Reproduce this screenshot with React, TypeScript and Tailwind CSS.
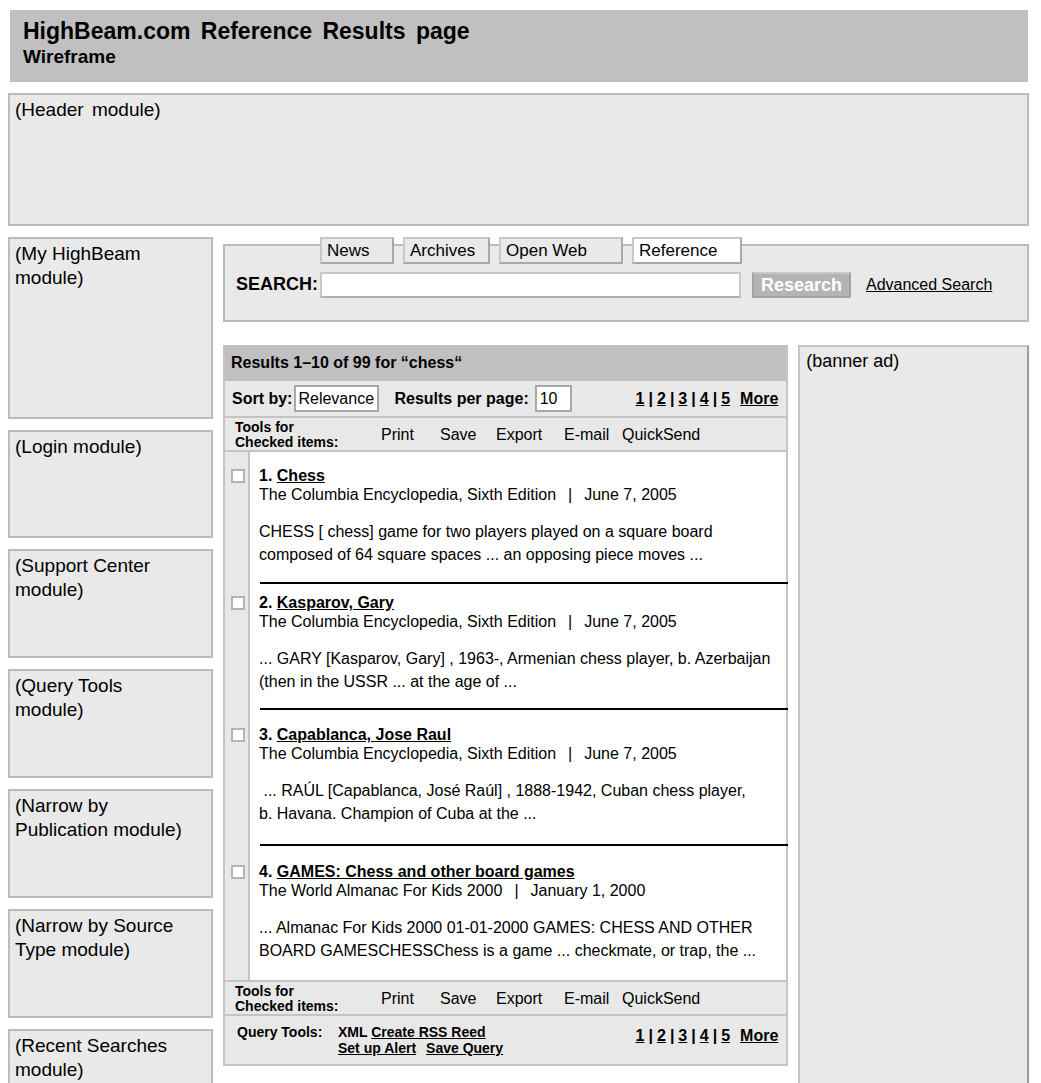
import React from 'react';

interface ResultItem {
  num: number;
  title: string;
  source: string;
  date: string;
  snippet: string[];
}

const results: ResultItem[] = [
  {
    num: 1,
    title: 'Chess',
    source: 'The Columbia Encyclopedia, Sixth Edition',
    date: 'June 7, 2005',
    snippet: ['CHESS [ chess] game for two players played on a square board', 'composed of 64 square spaces ... an opposing piece moves ...'],
  },
  {
    num: 2,
    title: 'Kasparov, Gary',
    source: 'The Columbia Encyclopedia, Sixth Edition',
    date: 'June 7, 2005',
    snippet: ['... GARY [Kasparov, Gary] , 1963-, Armenian chess player, b. Azerbaijan', '(then in the USSR ... at the age of ...'],
  },
  {
    num: 3,
    title: 'Capablanca, Jose Raul',
    source: 'The Columbia Encyclopedia, Sixth Edition',
    date: 'June 7, 2005',
    snippet: ['\u00a0... RAÚL [Capablanca, José Raúl] , 1888-1942, Cuban chess player,', 'b. Havana.  Champion of Cuba at the ...'],
  },
  {
    num: 4,
    title: 'GAMES: Chess and other board games',
    source: 'The World Almanac For Kids 2000',
    date: 'January  1, 2000',
    snippet: ['... Almanac For Kids 2000 01-01-2000 GAMES: CHESS AND OTHER', 'BOARD GAMESCHESSChess is a game ... checkmate,  or trap, the ...'],
  },
];

// spacing above each item's title, and above the separator under its snippet
const itemTop = ['pt-[14px]', 'pt-[9px]', 'pt-[15px]', 'pt-[16px]'];
const sepTop = ['mt-[16px]', 'mt-[15px]', 'mt-[19px]', ''];

const leftModules = [
  { label: ['(My HighBeam', 'module)'], h: 'h-[182px]' },
  { label: ['(Login module)'], h: 'h-[108px]' },
  { label: ['(Support Center', 'module)'], h: 'h-[109px]' },
  { label: ['(Query Tools', 'module)'], h: 'h-[109px]' },
  { label: ['(Narrow by', 'Publication  module)'], h: 'h-[109px]' },
  { label: ['(Narrow by Source', 'Type module)'], h: 'h-[109px]' },
  { label: ['(Recent Searches', 'module)'], h: 'h-[109px]' },
];

const tabs = [
  { name: 'News', w: 'w-[74px]', active: false },
  { name: 'Archives', w: 'w-[87px]', active: false },
  { name: 'Open Web', w: 'w-[124px]', active: false },
  { name: 'Reference', w: 'w-[110px]', active: true },
];

const Pager = () => (
  <div className="flex items-center gap-[4px] text-[16px] font-bold">
    <span className="underline">1</span>|<span className="underline">2</span>|<span className="underline">3</span>|
    <span className="underline">4</span>|<span className="underline">5</span>
    <span className="underline ml-[6px]">More</span>
  </div>
);

const ToolsRow = () => (
  <div className="flex items-center h-[36px] border-y-2 border-[#c4c4c4] bg-[#e8e8e8] pl-[10px]">
    <div className="text-[14px] font-bold leading-[15px] w-[146px] pt-[2px]">
      Tools for
      <br />
      Checked items:
    </div>
    <div className="flex text-[16px] pt-[2px]">
      <span className="w-[59px]">Print</span>
      <span className="w-[56px]">Save</span>
      <span className="w-[68px]">Export</span>
      <span className="w-[58px]">E-mail</span>
      <span>QuickSend</span>
    </div>
  </div>
);

const App: React.FC = () => {
  return (
    <div className="w-[1041px] h-[1083px] overflow-hidden bg-white text-black font-['Liberation_Sans',Arial,sans-serif]">
      {/* title bar */}
      <div className="ml-[10px] mt-[10px] w-[1018px] h-[72px] bg-[#c0c0c0] pl-[13px] pt-[7px]">
        <div className="text-[23px] font-bold leading-[29px] [word-spacing:4px]">HighBeam.com Reference Results page</div>
        <div className="text-[19px] font-bold leading-[22px]">Wireframe</div>
      </div>

      {/* header module */}
      <div className="ml-[8px] mt-[11px] w-[1021px] h-[133px] bg-[#e9e9e9] border-2 border-[#bcbcbc] pl-[5px] pt-[1px] text-[19px] [word-spacing:3px]">
        (Header module)
      </div>

      <div className="flex mt-[11px] ml-[8px]">
        {/* left column */}
        <div className="flex flex-col gap-[11px] w-[205px] shrink-0">
          {leftModules.map((m, i) => (
            <div key={i} className={`${m.h} bg-[#e9e9e9] border-2 border-[#bcbcbc] pl-[5px] pt-[3px] text-[19px] leading-[24px]`}>
              {m.label.map((l, j) => (
                <div key={j}>{l}</div>
              ))}
            </div>
          ))}
        </div>

        {/* main */}
        <div className="ml-[10px] w-[806px]">
          {/* search panel */}
          <div className="mt-[7px] h-[78px] bg-[#e9e9e9] border-2 border-[#bcbcbc]">
            <div className="flex gap-[9px] ml-[95px] -mt-[9px]">
              {tabs.map((t) => (
                <div
                  key={t.name}
                  className={`${t.w} h-[27px] border-2 border-[#c8c8c8] border-r-[#a8a8a8] border-b-[#a8a8a8] pl-[5px] text-[17px] leading-[23px] ${t.active ? 'bg-white' : 'bg-[#e9e9e9]'}`}
                >
                  {t.name}
                </div>
              ))}
            </div>
            <div className="flex items-center mt-[7px] ml-[11px]">
              <span className="text-[18px] font-bold w-[84px]">SEARCH:</span>
              <div className="w-[421px] h-[26px] bg-white border-2 border-[#c8c8c8] border-b-[#b0b0b0]" />
              <div className="ml-[11px] w-[99px] h-[26px] bg-[#b4b4b4] border-2 border-[#a4a4a4] border-t-[#c8c8c8] text-white font-bold text-[18px] leading-[22px] text-center">
                Research
              </div>
              <span className="ml-[15px] text-[16px] underline">Advanced Search</span>
            </div>
          </div>

          <div className="flex mt-[23px] items-start">
            {/* results panel */}
            <div className="w-[566px] border-x-2 border-b-2 border-[#c4c4c4]">
              <div className="h-[36px] bg-[#c0c0c0] pl-[6px] pt-[6px] text-[16px] font-bold">
                Results 1–10 of 99 for “chess“
              </div>
              <div className="flex items-center h-[35px] bg-[#e8e8e8] pl-[7px] pr-[8px] text-[16px]">
                <span className="font-bold mr-[2px]">Sort by:</span>
                <div className="h-[27px] w-[85px] bg-white border-2 border-[#a8a8a8] pl-[2px] leading-[23px]">Relevance</div>
                <span className="font-bold ml-[15px] mr-[6px]">Results per page:</span>
                <div className="h-[27px] w-[37px] bg-white border-2 border-[#a8a8a8] pl-[3px] leading-[23px]">10</div>
                <div className="ml-auto">
                  <Pager />
                </div>
              </div>
              <ToolsRow />

              {/* results list */}
              <div className="flex flex-col h-[528px]">
                {results.map((r, i) => (
                  <div key={r.num} className={`flex ${i === results.length - 1 ? 'flex-1' : ''}`}>
                    <div className={`w-[25px] shrink-0 bg-[#e8e8e8] border-r-2 border-[#c4c4c4] ${itemTop[i]}`}>
                      <div className="w-[14px] h-[14px] ml-[6px] mt-[3px] bg-white border-2 border-[#b4b4b4]" />
                    </div>
                    <div className={`flex-1 pl-[9px] ${itemTop[i]}`}>
                      <div className="text-[16px] leading-[19px] font-bold">
                        {r.num}. <span className="underline">{r.title}</span>
                      </div>
                      <div className="text-[16px] leading-[19px]">
                        {r.source}
                        <span className="mx-[12px]">|</span>
                        {r.date}
                      </div>
                      <div className="text-[16px] leading-[23px] mt-[16px]">
                        {r.snippet.map((s, j) => (
                          <div key={j}>{s}</div>
                        ))}
                      </div>
                      {i < results.length - 1 && <div className={`h-[2px] bg-black ml-[1px] -mr-[2px] ${sepTop[i]}`} />}
                    </div>
                  </div>
                ))}
              </div>

              <ToolsRow />
              <div className="flex h-[48px] bg-[#e8e8e8] pl-[12px] pr-[8px] pt-[8px]">
                <span className="text-[14px] font-bold w-[101px] leading-[16px]">Query Tools:</span>
                <div className="text-[14px] font-bold leading-[16px]">
                  <div>
                    XML <span className="underline">Create RSS Reed</span>
                  </div>
                  <div>
                    <span className="underline">Set up Alert</span>
                    <span className="ml-[10px] underline">Save Query</span>
                  </div>
                </div>
                <div className="ml-auto">
                  <Pager />
                </div>
              </div>
            </div>

            {/* banner ad */}
            <div className="ml-[10px] w-[231px] h-[760px] bg-[#e9e9e9] border-2 border-[#c4c4c4] border-r-[#9c9c9c] pl-[6px] pt-[1px] text-[18px]">
              (banner ad)
            </div>
          </div>
        </div>
      </div>
    </div>
  );
};

export default App;
